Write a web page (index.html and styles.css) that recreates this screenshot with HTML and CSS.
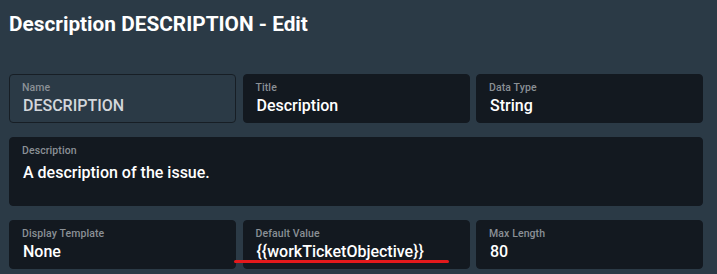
FILE: index.html
```html
<!DOCTYPE html>
<html lang="en">
<head>
<meta charset="utf-8">
<title>Description DESCRIPTION - Edit</title>
<link rel="stylesheet" href="styles.css">
</head>
<body>
<div class="page">
  <h1 class="heading">Description DESCRIPTION - Edit</h1>
  <div class="form">
    <div class="field field--readonly">
      <div class="label">Name</div>
      <div class="value">DESCRIPTION</div>
    </div>
    <div class="field">
      <div class="label">Title</div>
      <div class="value">Description</div>
    </div>
    <div class="field">
      <div class="label">Data Type</div>
      <div class="value">String</div>
    </div>
    <div class="field field--wide">
      <div class="label">Description</div>
      <div class="value">A description of the issue.</div>
    </div>
    <div class="field">
      <div class="label">Display Template</div>
      <div class="value">None</div>
    </div>
    <div class="field field--marked">
      <div class="label">Default Value</div>
      <div class="value">{{workTicketObjective}}</div>
      <span class="annotation"></span>
    </div>
    <div class="field">
      <div class="label">Max Length</div>
      <div class="value">80</div>
    </div>
  </div>
</div>
</body>
</html>
```

FILE: styles.css
```css
* { box-sizing: border-box; }
html, body {
  margin: 0;
  padding: 0;
  background: #2b3a46;
  height: 100%;
  overflow: hidden;
}
body {
  font-family: Roboto, "Liberation Sans", sans-serif;
  color: #ffffff;
}
.page {
  padding: 0 14px 0 9px;
}
.heading {
  margin: 0;
  padding-top: 12px;
  height: 74px;
  font-size: 20.8px;
  line-height: 24px;
  font-weight: 700;
  color: #ffffff;
}
.form {
  display: grid;
  grid-template-columns: 1fr 1fr 1fr;
  column-gap: 6.5px;
  row-gap: 14px;
}
.field {
  position: relative;
  height: 49px;
  padding: 7px 12px 0 12px;
  background: #131920;
  border: 1px solid #131920;
  border-radius: 4px;
}
.field--readonly {
  background: #2b3a46;
  border-color: #171e25;
}
.field--wide {
  grid-column: 1 / 4;
  height: 69px;
}
.label {
  font-size: 10.5px;
  line-height: 12px;
  font-weight: 500;
  color: #8a9096;
  letter-spacing: 0.1px;
}
.value {
  margin-top: 2px;
  padding-left: 1px;
  font-size: 16px;
  line-height: 20px;
  font-weight: 500;
  color: #ffffff;
}
.field--readonly .value { color: #d3d7db; }
.field--wide .value { margin-top: 6px; }
.annotation {
  position: absolute;
  left: -10px;
  right: 20px;
  bottom: 5px;
  height: 3px;
  border-radius: 2px;
  background: #e3191c;
}
```
